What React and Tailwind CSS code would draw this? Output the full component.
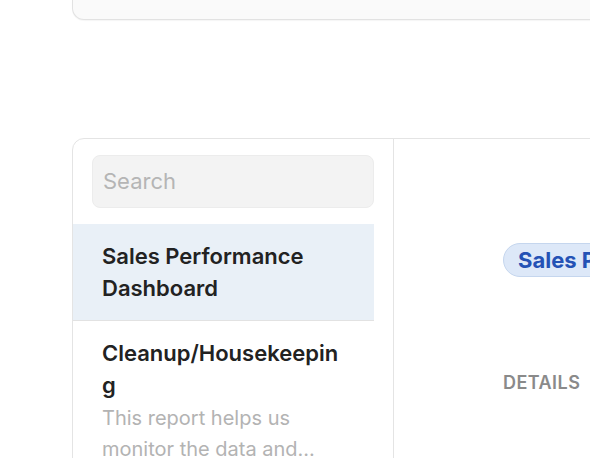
export default function App() {
  return (
    <div
      className="w-[590px] h-[458px] overflow-hidden bg-white"
      style={{ fontFamily: "Inter, 'Noto Sans', sans-serif" }}
    >
      <div className="w-[1000px] ml-[72px]">
        <div className="h-[20px] bg-[#fafafa] border border-t-0 border-[#e2e2e2] rounded-b-xl shadow-[0_1px_1px_rgba(0,0,0,0.04)]" />

        <div className="mt-[118px] h-[400px] flex border border-[#e4e4e4] rounded-xl bg-white">
          <div className="w-[321px] shrink-0 border-r border-[#e4e4e4] pr-[19px] pt-[16px] flex flex-col">
            <div className="ml-[19px] h-[53px] rounded-lg bg-[#f3f3f3] border border-[#ececec] flex items-center px-[10px]">
              <span className="text-[22px] text-[#b5b5b5]">Search</span>
            </div>
            <div className="mt-[16px] bg-[#e9f0f7] border-b border-[#e2e2e2] pl-[29px] pr-[20px] pt-[16px] pb-[16px]">
              <div className="text-[22px] leading-[32px] font-semibold text-[#222]">
                Sales Performance Dashboard
              </div>
            </div>
            <div className="pl-[29px] pr-[28px] pt-[16px]">
              <div className="text-[22px] leading-[32px] font-semibold text-[#222] break-all">
                Cleanup/Housekeeping
              </div>
              <div className="mt-[2px] text-[20px] leading-[31px] text-[#b3b3b3]">
                This report helps us monitor the data and...
              </div>
            </div>
          </div>

          <div className="flex-1 pl-[109px] pt-[104px]">
            <span className="inline-flex items-center h-[34px] rounded-full bg-[#dde8f8] border border-[#c5d6ee] px-[14px] text-[22px] font-bold text-[#2452b5] whitespace-nowrap">
              Sales Performance Dashboard
            </span>
            <div className="mt-[92px] text-[18px] font-semibold text-[#8a8a8a] tracking-wide">
              DETAILS
            </div>
          </div>
        </div>
      </div>
    </div>
  );
}
